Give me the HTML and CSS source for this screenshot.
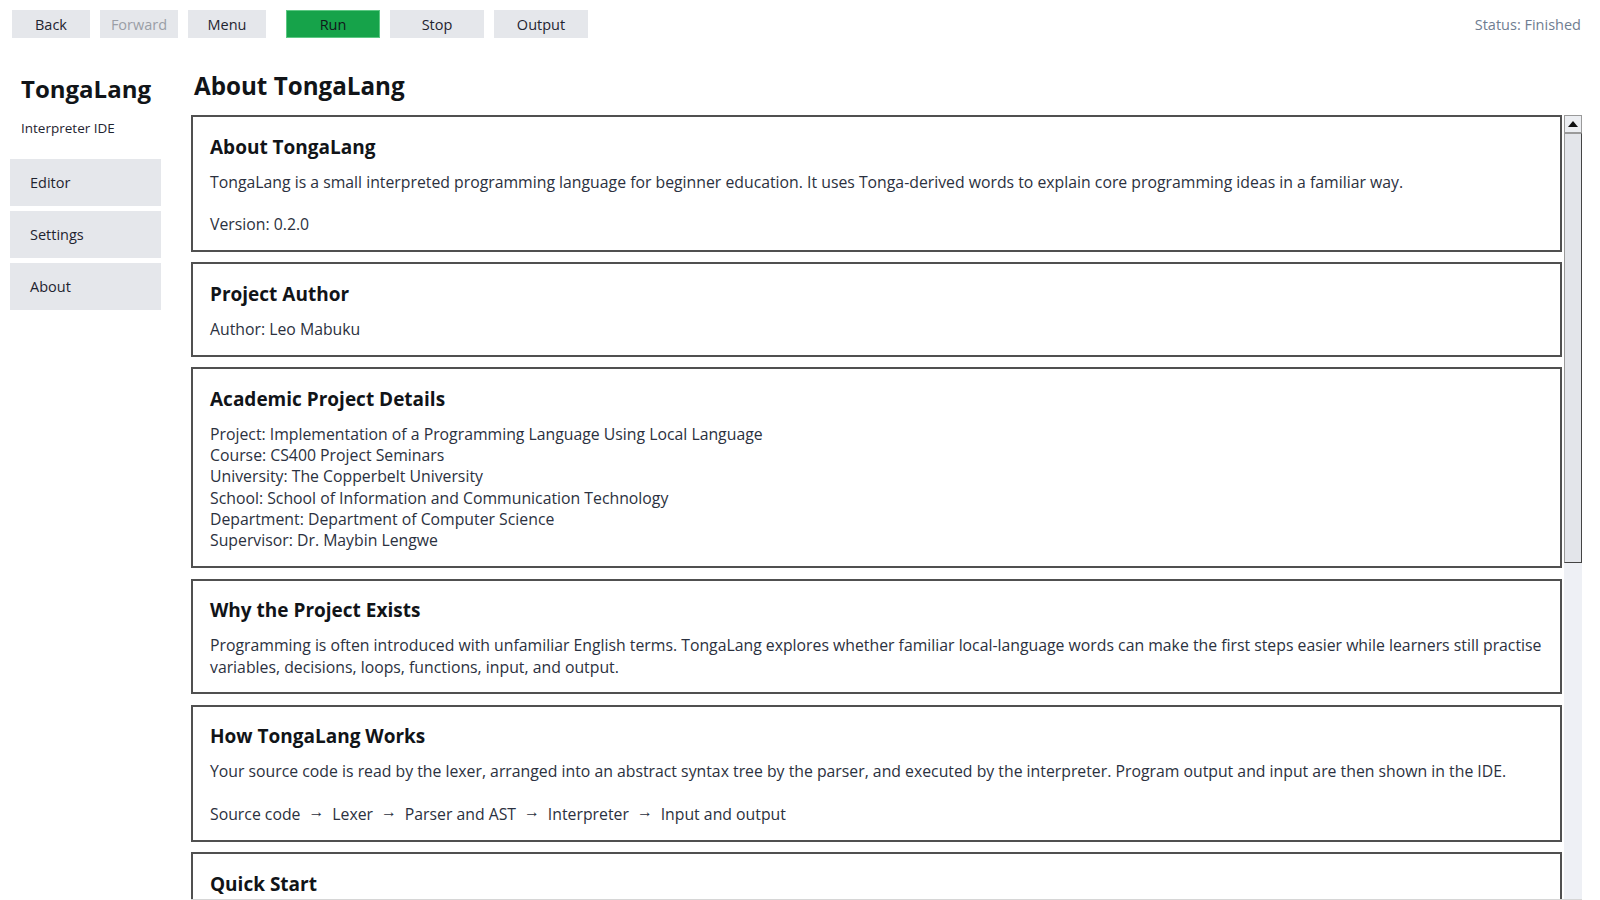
FILE: index.html
```html
<!DOCTYPE html>
<html lang="en">
<head>
    <meta charset="UTF-8">
    <meta name="viewport" content="width=device-width, initial-scale=1.0">
    <title>TongaLang Interpreter IDE</title>
    <link rel="stylesheet" href="styles.css">
</head>
<body>
    <div class="toolbar">
        <button class="tool-btn">Back</button>
        <button class="tool-btn" disabled>Forward</button>
        <button class="tool-btn">Menu</button>
        <button class="tool-btn wide run-btn">Run</button>
        <button class="tool-btn wide">Stop</button>
        <button class="tool-btn wide">Output</button>
        <span class="status">Status: Finished</span>
    </div>

    <div class="layout">
        <aside class="sidebar">
            <h2 class="app-title">TongaLang</h2>
            <p class="app-sub">Interpreter IDE</p>
            <nav class="nav">
                <button class="nav-btn">Editor</button>
                <button class="nav-btn">Settings</button>
                <button class="nav-btn">About</button>
            </nav>
        </aside>

        <main class="main">
            <h1 class="page-title">About TongaLang</h1>
            <div class="frame">
                <div class="cards">
                    <section class="card">
                        <h3>About TongaLang</h3>
                        <p>TongaLang is a small interpreted programming language for beginner education. It uses Tonga-derived words to explain core programming ideas in a familiar way.</p>
                        <p>Version: 0.2.0</p>
                    </section>

                    <section class="card">
                        <h3>Project Author</h3>
                        <p>Author: Leo Mabuku</p>
                    </section>

                    <section class="card">
                        <h3>Academic Project Details</h3>
                        <p>
                            Project: Implementation of a Programming Language Using Local Language<br>
                            Course: CS400 Project Seminars<br>
                            University: The Copperbelt University<br>
                            School: School of Information and Communication Technology<br>
                            Department: Department of Computer Science<br>
                            Supervisor: Dr. Maybin Lengwe
                        </p>
                    </section>

                    <section class="card">
                        <h3>Why the Project Exists</h3>
                        <p>Programming is often introduced with unfamiliar English terms. TongaLang explores whether familiar local-language words can make the first steps easier while learners still practise variables, decisions, loops, functions, input, and output.</p>
                    </section>

                    <section class="card">
                        <h3>How TongaLang Works</h3>
                        <p>Your source code is read by the lexer, arranged into an abstract syntax tree by the parser, and executed by the interpreter. Program output and input are then shown in the IDE.</p>
                        <p class="flow"><span>Source code</span><span class="arrow">&rarr;</span><span>Lexer</span><span class="arrow">&rarr;</span><span>Parser and AST</span><span class="arrow">&rarr;</span><span>Interpreter</span><span class="arrow">&rarr;</span><span>Input and output</span></p>
                    </section>

                    <section class="card">
                        <h3>Quick Start</h3>
                    </section>
                </div>

                <!-- scrollbar drawn by hand, like the Tk one -->
                <div class="scrollbar">
                    <div class="scroll-up"><span class="tri"></span></div>
                    <div class="scroll-thumb"></div>
                    <div class="scroll-track"></div>
                </div>
            </div>
        </main>
    </div>
</body>
</html>
```

FILE: styles.css
```css
body {
    font-family: 'Open Sans', 'Noto Sans', sans-serif;
    background-color: #ffffff;
    color: #2b3140;
    margin: 0;
    padding: 0;
    height: 100vh;
    overflow: hidden;
}
.toolbar {
    display: flex;
    align-items: center;
    gap: 10px;
    padding: 10px 19px 0 12px;
    height: 28px;
}
.tool-btn {
    width: 78px;
    height: 28px;
    border: none;
    border-radius: 0;
    background-color: #e5e7eb;
    color: #1f2430;
    font-family: inherit;
    font-size: 14.5px;
    padding: 0;
}
.tool-btn:disabled {
    color: #9a9ea6;
}
.wide {
    width: 94px;
}
.run-btn {
    margin-left: 10px;
    background-color: #16a34a;
    box-shadow: inset 0 0 0 1px #5cc883;
    color: #10161a;
}
.status {
    margin-left: auto;
    color: #6f7d91;
    font-size: 14.5px;
}
.layout {
    display: flex;
}
.sidebar {
    width: 151px;
    padding: 35px 0 0 10px;
    flex: 0 0 auto;
}
.app-title {
    margin: 0 0 14px 11px;
    font-size: 24px;
    line-height: 32px;
    font-weight: bold;
    color: #111418;
}
.app-sub {
    margin: 0 0 21px 11px;
    font-size: 13.5px;
    line-height: 19px;
    color: #1f2430;
}
.nav {
    display: flex;
    flex-direction: column;
    gap: 5px;
}
.nav-btn {
    height: 47px;
    border: none;
    background-color: #e5e7eb;
    text-align: left;
    padding: 0 0 0 20px;
    font-family: inherit;
    font-size: 14.5px;
    color: #1f2430;
}
.main {
    flex: 1;
    margin: 0 18px 0 30px;
    display: flex;
    flex-direction: column;
}
.page-title {
    margin: 31px 0 12px 3px;
    font-size: 24.2px;
    line-height: 34px;
    color: #111418;
}
.frame {
    display: flex;
    gap: 2px;
    height: 784px;
    border-bottom: 1px solid #d6d6d6;
    overflow: hidden;
}
.cards {
    flex: 1;
    display: flex;
    flex-direction: column;
    gap: 10.6px;
    overflow: hidden;
}
.card {
    border: 2px solid #505050;
    padding: 16.5px 8px 14.5px 17px;
    flex: 0 0 auto;
}
.card h3 {
    margin: 0 0 11px 0;
    font-size: 19px;
    line-height: 27px;
    color: #111418;
}
.card p {
    margin: 21.3px 0 0 0;
    font-size: 15.8px;
    line-height: 21.3px;
}
.card h3 + p {
    margin-top: 0;
}
.flow .arrow {
    margin: 0 8px;
    display: inline-block;
    transform: translateY(-3px);
}
.scrollbar {
    width: 18px;
    display: flex;
    flex-direction: column;
    background-color: #eef0f5;
}
.scroll-up {
    height: 16px;
    border: 1px solid #9a9a9a;
    background-color: #eceef2;
    display: flex;
    justify-content: center;
    align-items: center;
}
.tri {
    width: 0;
    height: 0;
    border-left: 5px solid transparent;
    border-right: 5px solid transparent;
    border-bottom: 6px solid #111;
}
.scroll-thumb {
    height: 428px;
    background-color: #e3e5ea;
    border: 1px solid #9a9a9a;
    border-right-color: #444;
    border-bottom-color: #444;
}
.scroll-track {
    flex: 1;
}
```
